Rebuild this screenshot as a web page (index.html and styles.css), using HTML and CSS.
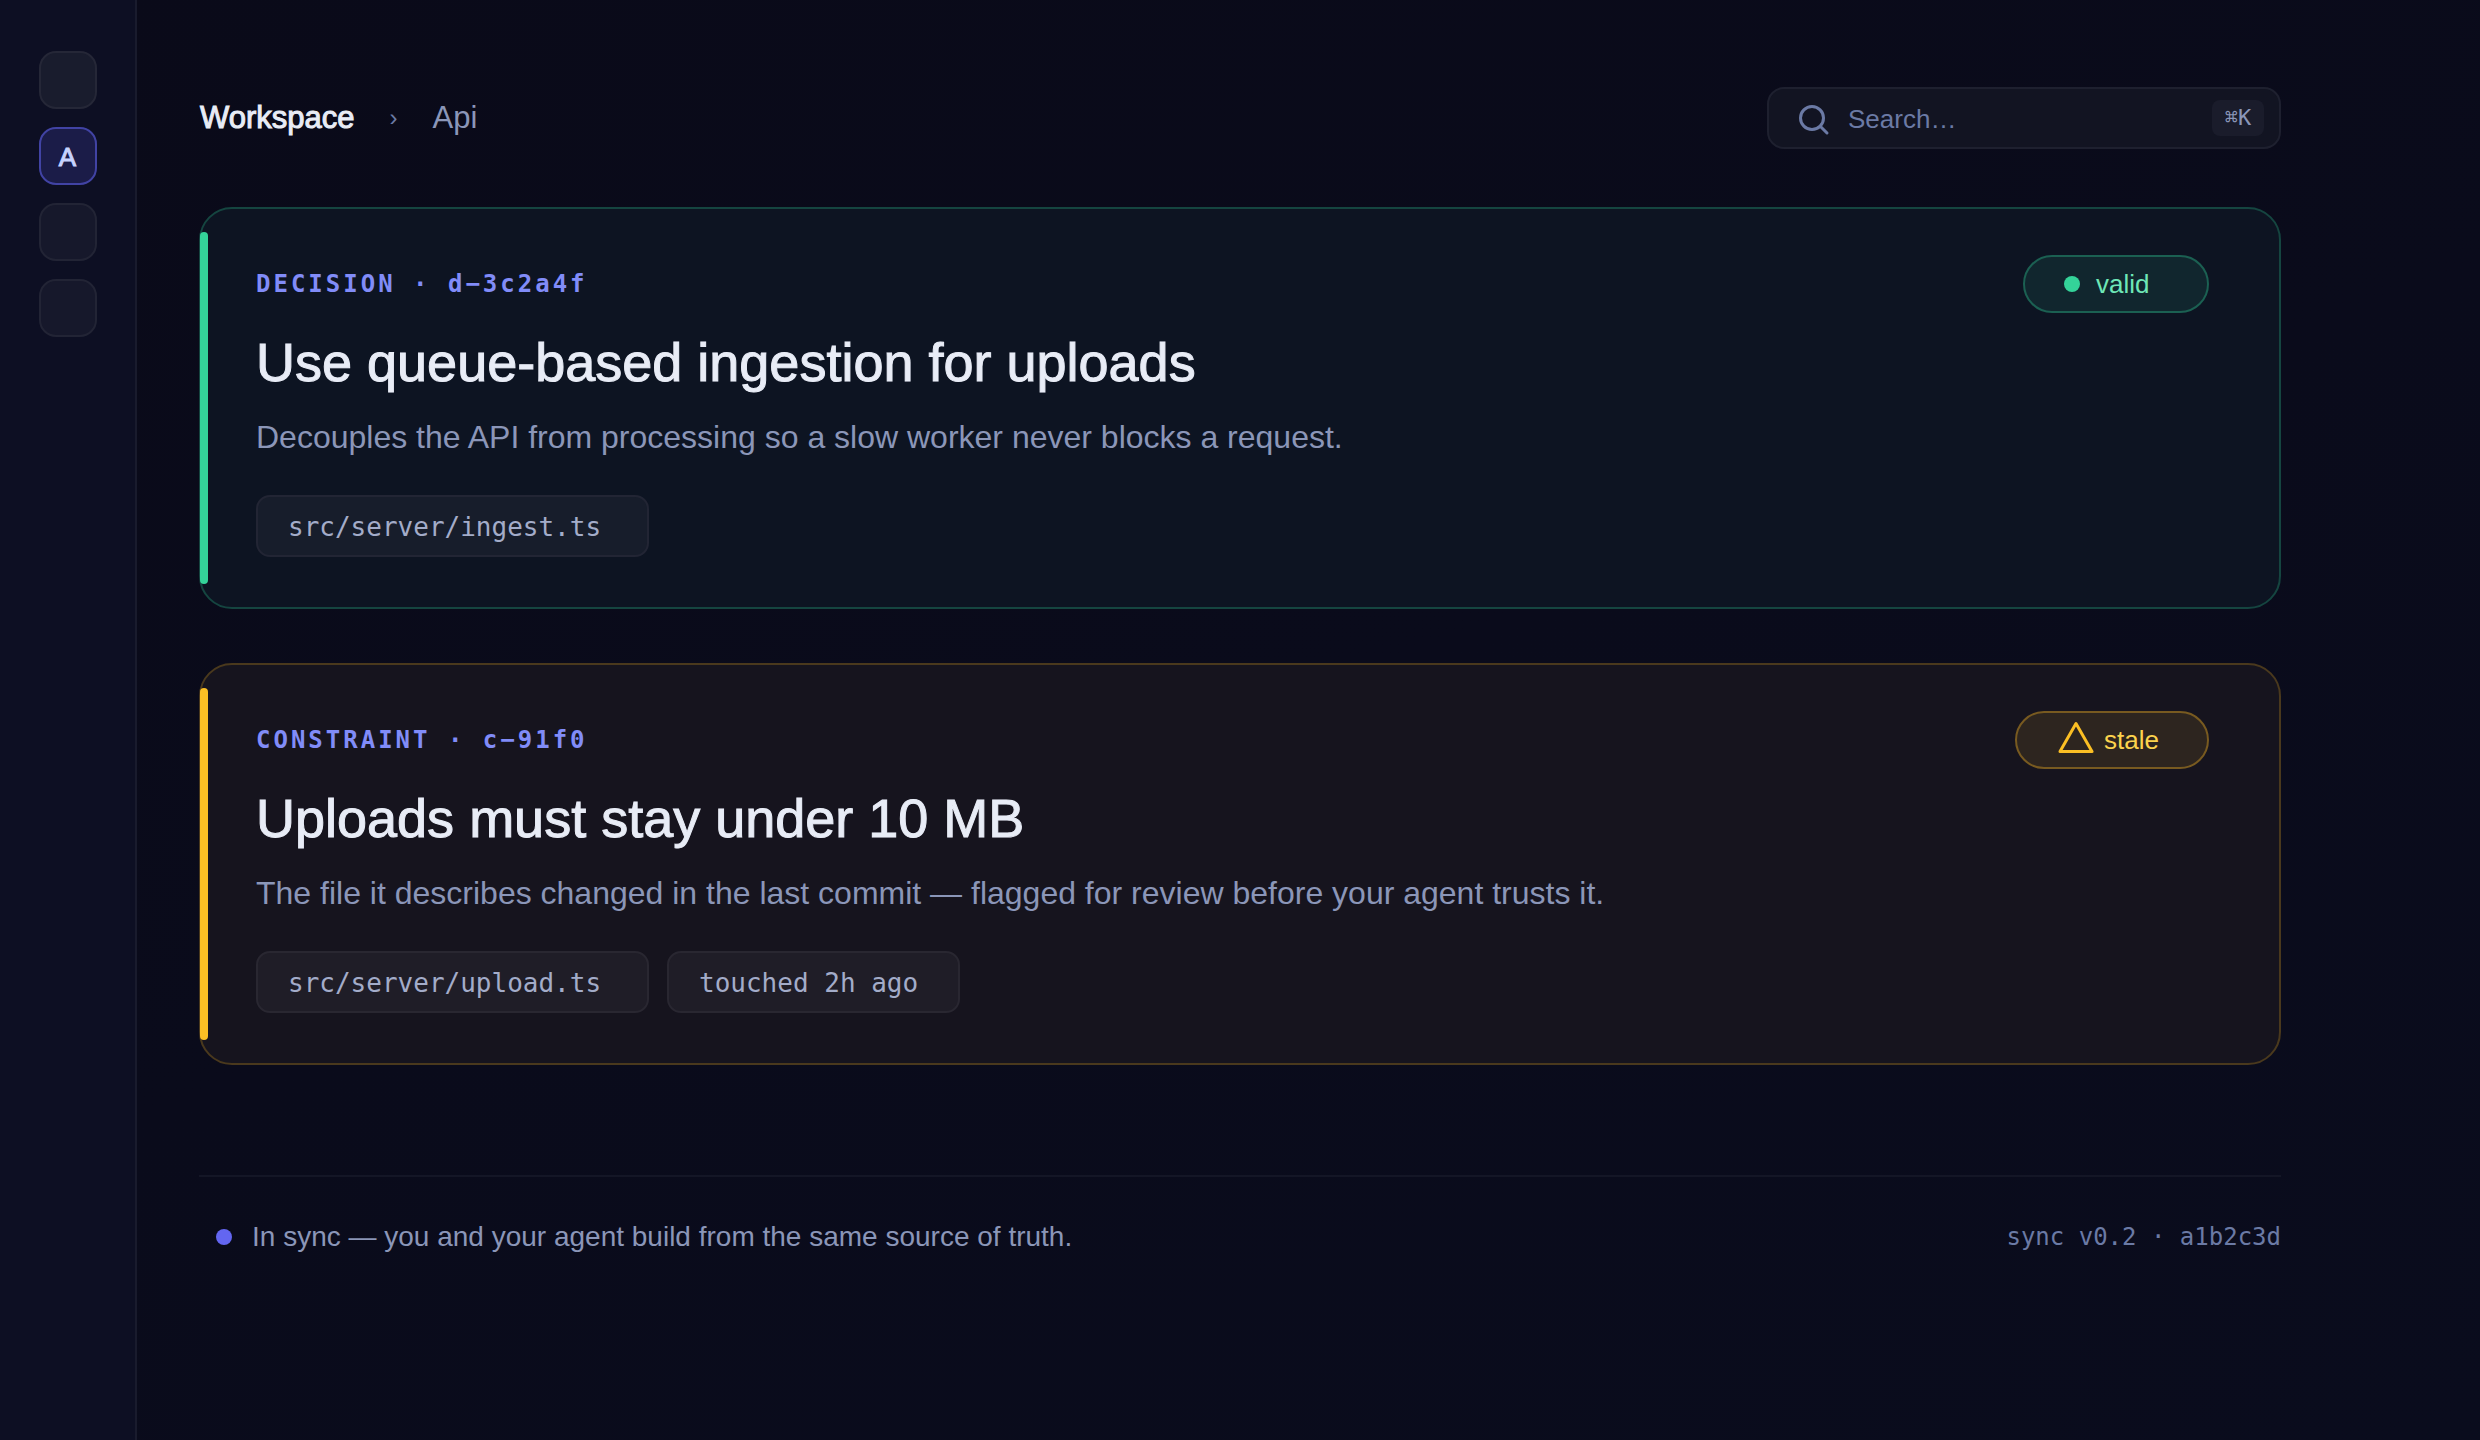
FILE: index.html
```html
<!DOCTYPE html>
<html lang="en">
<head>
    <meta charset="UTF-8">
    <meta name="viewport" content="width=device-width, initial-scale=1.0">
    <title>Workspace - Api</title>
    <link rel="stylesheet" href="styles.css">
</head>
<body>
    <nav class="sidebar" aria-label="Projects">
        <button type="button" class="project first" aria-label="Project 1"></button>
        <button type="button" class="project active">A</button>
        <button type="button" class="project" aria-label="Project 3"></button>
        <button type="button" class="project" aria-label="Project 4"></button>
    </nav>

    <main class="main">
        <header class="topbar">
            <div class="breadcrumb">
                <a href="#" class="root">Workspace</a>
                <span class="separator">›</span>
                <a href="#">Api</a>
            </div>
            <label class="search">
                <svg class="search-icon" width="32" height="32" viewBox="0 0 32 32" fill="none" stroke="currentColor" stroke-width="3" stroke-linecap="round" aria-hidden="true">
                    <circle cx="14" cy="14" r="11.5"/>
                    <path d="M22.5 22.5L29 29"/>
                </svg>
                <input type="text" class="search-input" placeholder="Search…" aria-label="Search">
                <kbd>⌘K</kbd>
            </label>
        </header>

        <article class="card valid">
            <div class="card-header">
                <span class="card-id">DECISION · d−3c2a4f</span>
                <span class="badge"><span class="dot"></span>valid</span>
            </div>
            <h2>Use queue-based ingestion for uploads</h2>
            <p>Decouples the API from processing so a slow worker never blocks a request.</p>
            <div class="chips">
                <span class="chip chip-file">src/server/ingest.ts</span>
            </div>
        </article>

        <article class="card stale">
            <div class="card-header">
                <span class="card-id">CONSTRAINT · c−91f0</span>
                <span class="badge">
                    <svg width="36" height="34" viewBox="0 0 36 34" fill="none" stroke="currentColor" stroke-width="3" stroke-linejoin="round" aria-hidden="true">
                        <path d="M18 2.5L34 30.5H2Z"/>
                    </svg>stale</span>
            </div>
            <h2>Uploads must stay under 10 MB</h2>
            <p>The file it describes changed in the last commit — flagged for review before your agent trusts it.</p>
            <div class="chips">
                <span class="chip chip-file">src/server/upload.ts</span>
                <span class="chip chip-time">touched 2h ago</span>
            </div>
        </article>

        <footer class="footer">
            <span class="sync"><span class="dot"></span>In sync — you and your agent build from the same source of truth.</span>
            <span class="version">sync v0.2 · a1b2c3d</span>
        </footer>
    </main>
</body>
</html>
```
FILE: styles.css
```css
* {
    box-sizing: border-box;
}

body {
    margin: 0;
    min-height: 100vh;
    display: flex;
    background: linear-gradient(160deg, #0a0a19, #0a0c1d);
    color: #8b96b8;
    font-family: "Liberation Sans", Arial, sans-serif;
}

a {
    color: inherit;
    text-decoration: none;
}

/* Sidebar */
.sidebar {
    width: 137px;
    flex-shrink: 0;
    padding-top: 51px;
    display: flex;
    flex-direction: column;
    align-items: center;
    gap: 18px;
    background: #0d0f23;
    border-right: 2px solid #191b2d;
}

.project {
    width: 58px;
    height: 58px;
    padding: 2px 0 0;
    border: 2px solid #222435;
    border-radius: 17px;
    background: #16182b;
    font-family: inherit;
    font-size: 26px;
}

.project.first {
    background: #191c2d;
    border-color: #252737;
}

.project.active {
    background: #1b1c48;
    border-color: #4143a4;
    color: #c7d2fe;
    -webkit-text-stroke: 1px #c7d2fe;
}

/* Main column */
.main {
    flex: 1;
    padding: 87px 199px 87px 62px;
}

.topbar {
    display: flex;
    justify-content: space-between;
    align-items: center;
    margin-bottom: 58px;
}

.breadcrumb {
    padding-left: 1px;
    display: flex;
    align-items: center;
    font-size: 31px;
    line-height: 36px;
}

.breadcrumb .root {
    color: #e8ecf6;
    -webkit-text-stroke: 1px #e8ecf6;
}

.separator {
    width: 78px;
    text-align: center;
    font-size: 24px;
    color: #6b7aa5;
}

.search {
    width: 514px;
    height: 62px;
    padding: 0 15px 0 29px;
    display: flex;
    align-items: center;
    background: #121422;
    border: 2px solid #1e202f;
    border-radius: 17px;
    color: #6b7aa5;
}

.search-icon {
    margin-top: 3px;
}

.search-input {
    flex: 1;
    min-width: 0;
    padding: 2px 0 0 18px;
    border: none;
    outline: none;
    background: none;
    color: #e8ecf6;
    font-family: inherit;
    font-size: 26px;
    line-height: 32px;
}

.search-input::placeholder {
    color: #6b7aa5;
    opacity: 1;
}

kbd {
    width: 52px;
    border-radius: 8px;
    background: #1a1c2b;
    color: #8b96b8;
    font-family: "DejaVu Sans Mono", monospace;
    font-size: 22px;
    line-height: 36px;
    text-align: center;
}

/* Cards */
.card {
    position: relative;
    margin-bottom: 54px;
    padding: 46px 70px 50px 55px;
    border: 2px solid;
    border-radius: 33px;
}

.card::before {
    content: "";
    position: absolute;
    left: -1px;
    top: 23px;
    bottom: 23px;
    width: 8px;
    border-radius: 4px;
}

.card.valid {
    background: #0d1422;
    border-color: #154540;
}

.card.valid::before {
    background: #34d399;
}

.card.stale {
    background: #16141e;
    border-color: #4a391d;
}

.card.stale::before {
    background: #fbbf24;
}

.card-header {
    display: flex;
    justify-content: space-between;
    align-items: center;
}

.card-id {
    color: #818cf8;
    font-family: "DejaVu Sans Mono", monospace;
    font-size: 24px;
    font-weight: bold;
    letter-spacing: 3px;
}

.badge {
    height: 58px;
    display: flex;
    align-items: center;
    border: 2px solid;
    border-radius: 29px;
    font-size: 26px;
}

.dot {
    width: 16px;
    height: 16px;
    border-radius: 50%;
}

.valid .badge {
    width: 186px;
    padding-left: 39px;
    gap: 16px;
    background: #11262e;
    border-color: #1b6052;
    color: #6ee7b7;
}

.valid .dot {
    background: #34d399;
}

.stale .badge {
    width: 194px;
    padding-left: 41px;
    gap: 10px;
    background: #2d251f;
    border-color: #785a20;
    color: #fcd34d;
}

.stale svg {
    margin-bottom: 4px;
    color: #fbbf24;
}

.card h2 {
    margin: 19px 0 25px;
    color: #e8ecf6;
    font-size: 54px;
    font-weight: normal;
    line-height: 60px;
    -webkit-text-stroke: 1px #e8ecf6;
}

.card p {
    margin: 0 0 38px;
    font-size: 32px;
    line-height: 40px;
}

.chips {
    display: flex;
    gap: 18px;
}

.chip {
    height: 62px;
    padding-left: 30px;
    border: 2px solid #222534;
    border-radius: 14px;
    background: #171d2b;
    color: #a3acc9;
    font-family: "DejaVu Sans Mono", monospace;
    font-size: 26px;
    line-height: 60px;
}

.stale .chip {
    background: #1f1d27;
    border-color: #292731;
}

.chip-file {
    width: 393px;
}

.chip-time {
    width: 293px;
}

/* Footer */
.footer {
    margin-top: 110px;
    padding: 44px 0 0 17px;
    display: flex;
    justify-content: space-between;
    align-items: center;
    border-top: 2px solid #141626;
}

.sync {
    display: flex;
    align-items: center;
    gap: 20px;
    font-size: 28px;
    line-height: 32px;
}

.sync .dot {
    background: #6366f1;
}

.version {
    color: #6b7aa5;
    font-family: "DejaVu Sans Mono", monospace;
    font-size: 24px;
}
```
